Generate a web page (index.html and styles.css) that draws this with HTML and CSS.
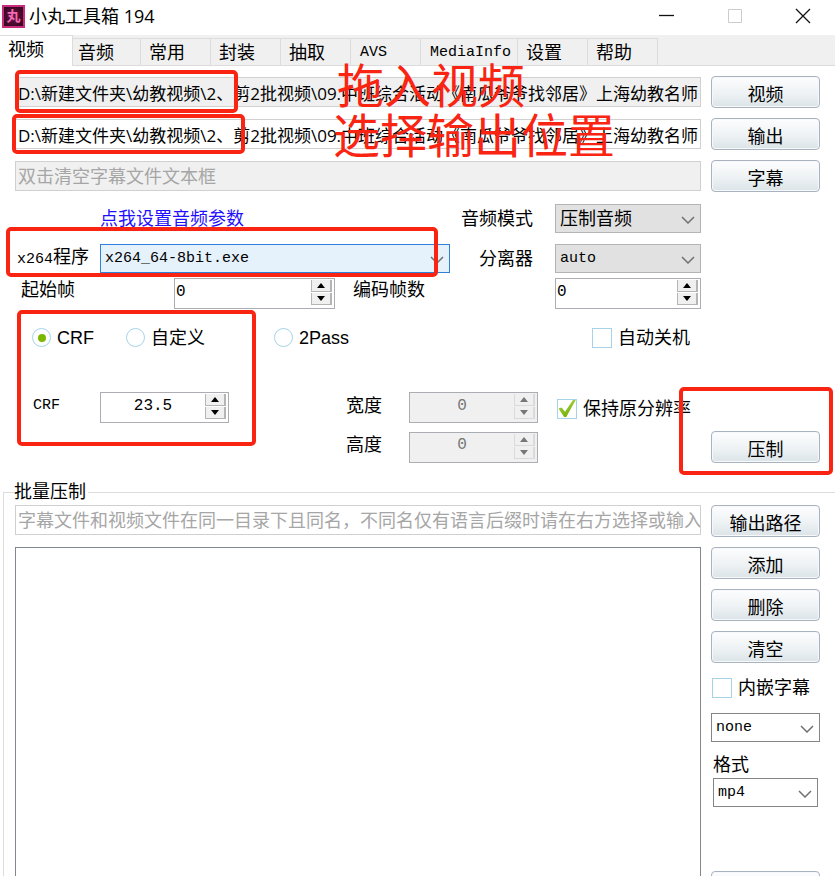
FILE: index.html
```html
<!DOCTYPE html>
<html lang="zh-CN">
<head>
<meta charset="utf-8">
<title>小丸工具箱 194</title>
<link rel="stylesheet" href="styles.css">
</head>
<body>
<svg width="0" height="0" class="defs" aria-hidden="true">
  <symbol id="chevron" viewBox="0 0 14 8"><path d="M1 1l6 6 6-6" fill="none" stroke="#707070" stroke-width="1.5"/></symbol>
  <symbol id="up" viewBox="0 0 8 5"><path d="M0 5L4 0l4 5z" fill="currentColor"/></symbol>
  <symbol id="down" viewBox="0 0 8 5"><path d="M0 0l4 5 4-5z" fill="currentColor"/></symbol>
</svg>
<div class="window">
  <header class="titlebar">
    <span class="logo" aria-hidden="true">丸</span>
    <h1>小丸工具箱 194</h1>
    <button class="winbtn" aria-label="最小化"><svg width="16" height="16" viewBox="0 0 16 16"><path d="M0 7.500h15" stroke="#111" stroke-width="1.3"/></svg></button>
    <button class="winbtn" aria-label="最大化" disabled><svg width="16" height="16" viewBox="0 0 16 16"><path d="M1.500 1.500h13v13h-13z" fill="none" stroke="#ccc"/></svg></button>
    <button class="winbtn" aria-label="关闭"><svg width="16" height="16" viewBox="0 0 16 16"><path d="M1 1l14 14M15 1L1 15" stroke="#111" stroke-width="1.3"/></svg></button>
  </header>

  <nav class="tabs" role="tablist">
    <button class="tab active" role="tab" aria-selected="true">视频</button>
    <button class="tab second" role="tab">音频</button>
    <button class="tab" role="tab">常用</button>
    <button class="tab" role="tab">封装</button>
    <button class="tab" role="tab">抽取</button>
    <button class="tab mono" role="tab">AVS</button>
    <button class="tab mono wide" role="tab">MediaInfo</button>
    <button class="tab" role="tab">设置</button>
    <button class="tab" role="tab">帮助</button>
  </nav>

  <main class="panel">
    <section class="files">
      <div class="row">
        <input class="text path shaded" aria-label="视频文件" readonly value="D:\新建文件夹\幼教视频\2、剪2批视频\09.中班综合活动《南瓜爷爷找邻居》上海幼教名师">
        <button class="btn">视频</button>
      </div>
      <div class="row">
        <input class="text path" aria-label="输出文件" value="D:\新建文件夹\幼教视频\2、剪2批视频\09.中班综合活动《南瓜爷爷找邻居》上海幼教名师">
        <button class="btn">输出</button>
      </div>
      <div class="row">
        <input class="text shaded" aria-label="字幕文件" placeholder="双击清空字幕文件文本框">
        <button class="btn">字幕</button>
      </div>
    </section>

    <section class="settings">
      <div class="row">
        <div class="fields">
          <a class="link" href="#audio">点我设置音频参数</a>
          <label class="right" for="amode">音频模式</label>
          <div class="combo gray"><select id="amode"><option>压制音频</option></select><svg><use href="#chevron"/></svg></div>
        </div>
      </div>
      <div class="row">
        <div class="fields">
          <label class="program" for="x264"><span class="mono">x264</span>程序</label>
          <div class="combo focus mono"><select id="x264"><option>x264_64-8bit.exe</option></select><svg><use href="#chevron"/></svg></div>
          <label class="right" for="demux">分离器</label>
          <div class="combo gray mono"><select id="demux"><option>auto</option></select><svg><use href="#chevron"/></svg></div>
        </div>
      </div>
      <div class="row">
        <div class="frames">
          <label class="start" for="start">起始帧</label>
          <div class="spin"><input id="start" value="0"><span class="arrows"><button aria-label="增加"><svg><use href="#up"/></svg></button><button aria-label="减少"><svg><use href="#down"/></svg></button></span></div>
          <label class="count" for="count">编码帧数</label>
          <div class="spin"><input id="count" value="0"><span class="arrows"><button aria-label="增加"><svg><use href="#up"/></svg></button><button aria-label="减少"><svg><use href="#down"/></svg></button></span></div>
        </div>
      </div>
      <div class="row">
        <div class="modes">
          <label class="check crf"><input type="radio" name="mode" checked>CRF</label>
          <label class="check custom"><input type="radio" name="mode">自定义</label>
          <label class="check"><input type="radio" name="mode">2Pass</label>
          <label class="check shutdown"><input type="checkbox">自动关机</label>
        </div>
      </div>
      <div class="row size">
        <div class="quality">
          <label class="mono crflabel" for="crf">CRF</label>
          <div class="spin center"><input id="crf" value="23.5"><span class="arrows"><button aria-label="增加"><svg><use href="#up"/></svg></button><button aria-label="减少"><svg><use href="#down"/></svg></button></span></div>
          <label class="right" for="w">宽度</label>
          <div class="spin center off"><input id="w" value="0" disabled><span class="arrows"><button disabled aria-label="增加"><svg><use href="#up"/></svg></button><button disabled aria-label="减少"><svg><use href="#down"/></svg></button></span></div>
          <label class="check keep"><input type="checkbox" checked>保持原分辨率</label>
        </div>
      </div>
      <div class="row">
        <div class="quality">
          <label class="right height" for="h">高度</label>
          <div class="spin center off"><input id="h" value="0" disabled><span class="arrows"><button disabled aria-label="增加"><svg><use href="#up"/></svg></button><button disabled aria-label="减少"><svg><use href="#down"/></svg></button></span></div>
        </div>
        <button class="btn">压制</button>
      </div>
    </section>
  </main>

  <fieldset class="batch">
    <legend>批量压制</legend>
    <div class="batchgrid">
      <div class="queue">
        <input class="text" aria-label="输出路径" placeholder="字幕文件和视频文件在同一目录下且同名，不同名仅有语言后缀时请在右方选择或输入">
        <div class="list" role="listbox" aria-label="批量列表"></div>
      </div>
      <div class="side">
        <button class="btn">输出路径</button>
        <button class="btn">添加</button>
        <button class="btn">删除</button>
        <button class="btn">清空</button>
        <label class="check embed"><input type="checkbox">内嵌字幕</label>
        <div class="combo mono"><select aria-label="字幕语言"><option>none</option></select><svg><use href="#chevron"/></svg></div>
        <div class="format">
          <label for="fmt">格式</label>
          <div class="combo mono"><select id="fmt"><option>mp4</option></select><svg><use href="#chevron"/></svg></div>
        </div>
        <button class="btn last" aria-label="压制"></button>
      </div>
    </div>
  </fieldset>

  <div class="mark mark-input"></div>
  <div class="mark mark-output"></div>
  <div class="mark mark-program"></div>
  <div class="mark mark-crf"></div>
  <div class="mark mark-go"></div>
  <p class="note note-input">拖入视频</p>
  <p class="note note-output">选择输出位置</p>
</div>
</body>
</html>
```
FILE: styles.css
```css
* { box-sizing: border-box; }

body {
  margin: 0;
  background: #fff;
  color: #000;
  font: 18px/20px "Liberation Sans", "Noto Sans CJK SC", sans-serif;
}

button, input, select { font: inherit; color: inherit; margin: 0; }
.defs { position: absolute; }
.mono { font-family: "Liberation Mono", "Noto Sans CJK SC", monospace; font-size: 15px; }

.window {
  position: relative;
  display: flex;
  flex-direction: column;
  height: 100vh;
  overflow: hidden;
}

/* title bar */
.titlebar { display: flex; align-items: center; height: 35px; padding: 0 24px 3px 2px; flex: none; }
.titlebar h1 {
  flex: 1;
  margin: 0 0 0 4px;
  font: 18px/24px "Open Sans", "Noto Sans CJK SC", sans-serif;
}
.logo {
  width: 23px;
  height: 23px;
  border: 2px solid #c92c7c;
  background: radial-gradient(#6b1144, #30041c);
  color: #f06bb4;
  font-size: 14px;
  font-weight: bold;
  line-height: 18px;
  text-align: center;
}
.winbtn { display: flex; padding: 0; border: 0; background: none; margin-left: 52px; }
.winbtn:first-of-type { margin-left: 0; }

/* tabs */
.tabs {
  display: flex;
  align-items: flex-end;
  height: 31px;
  flex: none;
  background: #f0f0f0;
  border-bottom: 1px solid #dcdcdc;
}
.tab {
  width: 70px;
  height: 27px;
  padding: 2px 0 0 8px;
  border: 1px solid #dcdcdc;
  border-width: 1px 1px 0 0;
  background: #f0f0f0;
  text-align: left;
  white-space: nowrap;
}
.tab.active { width: 73px; height: 31px; margin-bottom: -1px; padding: 0 0 2px 8px; background: #fff; }
.tab.second { width: 68px; padding-left: 5px; }
.tab.mono { padding-left: 9px; }
.tab.wide { width: 97px; }

/* shared rows */
.panel { flex: none; padding: 10px 15px 0; }
.row { display: grid; grid-template-columns: minmax(0, 1fr) 109px; column-gap: 10px; align-items: center; }
.files { display: grid; gap: 10px; }

.text {
  width: 100%;
  height: 30px;
  padding: 2px 0 0 2px;
  border: 1px solid #d0d0d0;
  background: #fff;
  outline: 0;
}
.text::placeholder { color: #a6a6a6; opacity: 1; }
.path { font: 17px/20px "Open Sans", "Noto Sans CJK SC", sans-serif; padding-top: 0; }
.shaded { background: #f0f0f0; }

.btn {
  height: 32px;
  padding: 5px 0 0;
  border: 1px solid #a9b3bf;
  border-radius: 4px;
  background: linear-gradient(#fdfdfe, #eef2f4 55%, #dbe4e8);
  box-shadow: inset 0 0 0 1px #f6f8fa;
}

.combo { position: relative; height: 29px; border: 1px solid #858585; background: #fff; }
.combo select {
  appearance: none;
  display: block;
  width: 100%;
  height: 100%;
  padding: 0 28px 0 4px;
  border: 0;
  background: none;
  outline: 0;
}
.combo svg { position: absolute; right: 5px; top: 11px; width: 14px; height: 8px; pointer-events: none; }
.gray { border-color: #b4b4b4; background: #e1e1e1; }
.focus { border-color: #2f80d8; background: #e5f1fb; }

.spin { display: flex; height: 31px; border: 1px solid #abadb3; background: #fff; }
.spin input {
  flex: 1;
  min-width: 0;
  padding: 0 1px 4px;
  border: 0;
  background: none;
  outline: 0;
  font: 16px/20px "Liberation Mono", monospace;
}
.center input { text-align: center; }
.arrows { display: grid; grid-template-rows: 12px 12px; gap: 1px; width: 23px; padding: 1px 2px 0 0; }
.arrows button {
  display: flex;
  align-items: center;
  justify-content: center;
  padding: 0;
  border: 1px solid #b5b5b5;
  border-width: 0 2px 1px 1px;
  background: #f0f0f0;
}
.arrows svg { width: 8px; height: 5px; }
.off { background: #f0f0f0; color: #777; }
.off button { border-color: #dadada; color: #777; }

.check { display: flex; align-items: center; gap: 6px; white-space: nowrap; }
.check input {
  appearance: none;
  flex: none;
  display: flex;
  align-items: center;
  justify-content: center;
  width: 20px;
  height: 20px;
  border: 1px solid #a5d3e8;
  background: #fff;
}
.check input[type="radio"] { width: 19px; height: 19px; border-radius: 50%; }
.check input[type="radio"]:checked::before {
  content: "";
  width: 8px;
  height: 8px;
  border-radius: 50%;
  background: #7cb800;
}
.check input[type="checkbox"]:checked::before {
  content: "";
  width: 18px;
  height: 18px;
  background: linear-gradient(160deg, #a6d648, #6fa800);
  clip-path: polygon(3% 50%, 20% 44%, 39% 68%, 84% 2%, 100% 0, 46% 97%, 34% 97%);
}

/* encoder settings */
.settings { display: grid; grid-template-rows: 29px 29px 31px 25px; row-gap: 8px; padding-top: 12px; }
.settings .row:nth-child(2) { padding-top: 3px; }
.settings .row:nth-child(4) { margin-top: 8px; margin-bottom: -8px; }
.fields { display: grid; grid-template-columns: 85px minmax(0, 1fr) 105px 146px; align-items: center; }
.link { grid-column: 2; color: #1f0fff; text-underline-offset: 2px; }
.right { text-align: right; padding-right: 22px; }
.program { padding-left: 2px; white-space: nowrap; }
.frames { display: grid; grid-template-columns: 159px 161px 1fr 146px; }
.start { padding: 2px 6px; }
.count { padding: 2px 18px; }
.modes { display: flex; padding-left: 17px; }
.crf { width: 94px; }
.custom { width: 148px; }
.shutdown { margin-left: auto; width: 109px; }
.size { margin-top: 42px; }
.quality { display: grid; grid-template-columns: 85px 129px minmax(0, 1fr) 129px 163px; align-items: center; }
.crflabel { padding: 0 18px 4px; }
.quality .right { padding: 0 27px 4px 0; }
.keep { padding: 2px 0 0 19px; }
.height { grid-column: 3; }

/* batch area */
.batch {
  flex: 1;
  min-height: 0;
  min-width: 0;
  margin: 19px 0 0 3px;
  padding: 3px 15px 0 11px;
  border: 1px solid #dcdcdc;
  border-width: 1px 0 0 1px;
}
.batch legend { padding: 0 2px 0 0; margin-left: -1px; }
.batchgrid { display: grid; grid-template-columns: minmax(0, 1fr) 109px; column-gap: 10px; }
.queue { display: flex; flex-direction: column; gap: 12px; }
.list { flex: 1; border: 1px solid #828790; }
.side { display: flex; flex-direction: column; gap: 10px; }
.side .btn { flex: none; }
.embed { margin: 5px 0; padding-left: 1px; }
.format { padding: 3px 2px 0; }
.format label { display: block; padding-bottom: 3px; line-height: 20px; }
.last { margin-top: 54px; }

/* annotations drawn over the window */
.mark { position: absolute; border: 4px solid #fa2412; border-radius: 5px; pointer-events: none; }
.mark-input { left: 15px; top: 70px; width: 223px; height: 43px; }
.mark-output { left: 12px; top: 114px; width: 233px; height: 40px; }
.mark-program { left: 6px; top: 227px; width: 432px; height: 50px; }
.mark-crf { left: 17px; top: 310px; width: 239px; height: 136px; }
.mark-go { right: 2px; top: 387px; width: 154px; height: 88px; }
.note {
  position: absolute;
  margin: 0;
  color: #fa2412;
  font-size: 47px;
  line-height: 50px;
  white-space: nowrap;
  pointer-events: none;
}
.note-input { left: 337px; top: 62px; }
.note-output { left: 333px; top: 112px; }
```
